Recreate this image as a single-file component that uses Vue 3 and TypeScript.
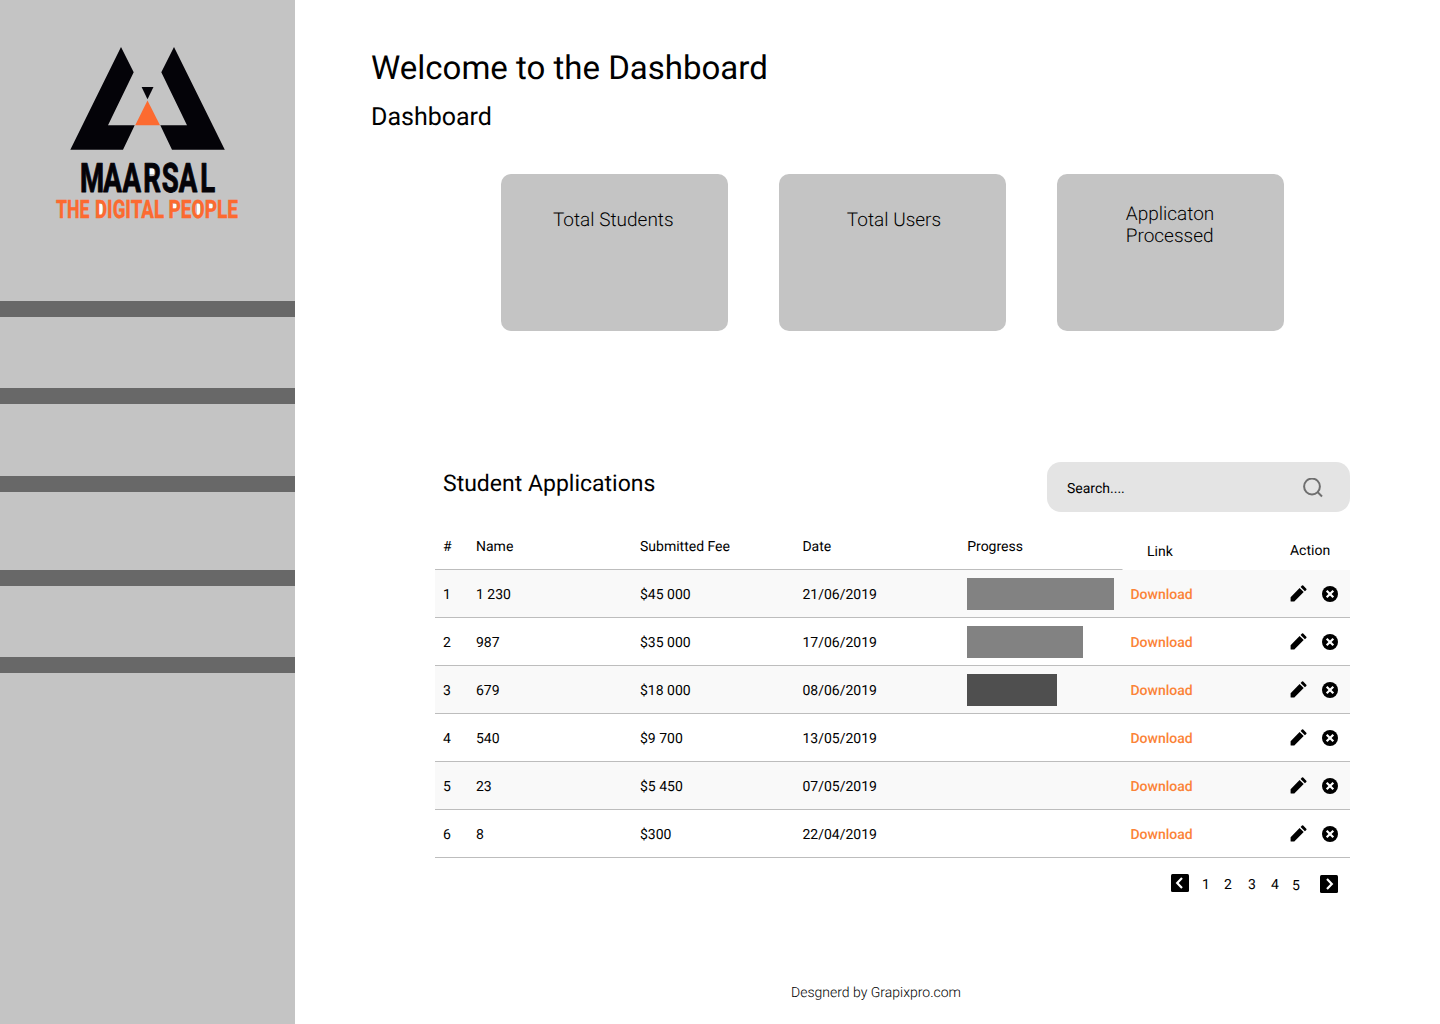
<script setup lang="ts">
interface Application {
  id: number
  name: string
  fee: string
  date: string
  progress: number
  tone?: string
}

const menuSlots: number[] = [1, 2, 3, 4, 5]
const pages: number[] = [1, 2, 3, 4, 5]
const cards: string[] = ['Total Students', 'Total Users', 'Applicaton\nProcessed']

const applications: Application[] = [
  { id: 1, name: '1 230', fee: '$45 000', date: '21/06/2019', progress: 147.3 },
  { id: 2, name: '987', fee: '$35 000', date: '17/06/2019', progress: 116.3 },
  { id: 3, name: '679', fee: '$18 000', date: '08/06/2019', progress: 90.3, tone: 'dark' },
  { id: 4, name: '540', fee: '$9 700', date: '13/05/2019', progress: 0 },
  { id: 5, name: '23', fee: '$5 450', date: '07/05/2019', progress: 0 },
  { id: 6, name: '8', fee: '$300', date: '22/04/2019', progress: 0 },
]
</script>

<template>
  <div class="page">
    <aside class="sidebar">
      <svg class="logo" width="190" height="190" viewBox="52 43 190 190">
        <path fill="#040308" d="M121 47 133.7 72.3 108 125.3H134.7L123 149.7H70.3Z" />
        <path fill="#040308" d="M174 47 224.8 149.7H172L160.3 125.3H187L161.3 72.3Z" />
        <path fill="#040308" d="M141.6 87H153.5L147.5 99.2Z" />
        <path fill="#fc6a30" d="M147.5 100.5 160 125.3H135.2Z" />
        <path
          fill="#fff"
          d="M148 167H154V174H148ZM99 204H102.500V215H99ZM173 204H176.500V209H173ZM197 204H200V215H197ZM209 204H212.500V209H209Z"
        />
        <text
          class="brand"
          transform="scale(.68 1)"
          x="135.3 165.6 193.7 223.6 250.2 276.3 305.3"
          y="191.5"
        >MAARSAL</text>
        <text class="tagline" x="56" y="218.4" textLength="33.500" lengthAdjust="spacingAndGlyphs">THE</text>
        <text class="tagline" x="95" y="218.4" textLength="69" lengthAdjust="spacingAndGlyphs">DIGITAL</text>
        <text class="tagline" x="168.500" y="218.4" textLength="69.500" lengthAdjust="spacingAndGlyphs">PEOPLE</text>
      </svg>
      <nav class="menu">
        <div v-for="slot in menuSlots" :key="slot" class="divider" />
      </nav>
    </aside>

    <main class="content">
      <h1>Welcome to the Dashboard</h1>
      <h2>Dashboard</h2>

      <section class="cards">
        <div v-for="card in cards" :key="card" class="card"><span>{{ card }}</span></div>
      </section>

      <section class="applications">
        <header class="toolbar">
          <h3>Student Applications</h3>
          <div class="search">
            <span>Search....</span>
            <svg width="20" height="20" viewBox="0 0 20 20" fill="none" stroke="#6f6f6f" stroke-width="2">
              <circle cx="9" cy="8.500" r="7.900" />
              <path d="M14.500 14 19 18.500" />
            </svg>
          </div>
        </header>

        <div class="row head">
          <span>#</span><span>Name</span><span>Submitted Fee</span><span>Date</span>
          <span>Progress</span><span class="link-head">Link</span><span class="action-head">Action</span>
        </div>
        <div v-for="app in applications" :key="app.id" class="row entry">
          <span>{{ app.id }}</span>
          <span>{{ app.name }}</span>
          <span>{{ app.fee }}</span>
          <span>{{ app.date }}</span>
          <div class="progress">
            <div v-if="app.progress" class="bar" :class="app.tone" :style="{ width: app.progress + 'px' }" />
          </div>
          <a class="download">Download</a>
          <div class="actions">
            <svg width="17" height="18" viewBox="0 0 17 18">
              <path d="M.6 12.300 9.600 3 13.700 7.100 4.300 16.500H1.200Q.6 16.500.6 15.900ZM10.600 2 12 .6Q12.600 0 13.200.6L16.300 3.700Q16.900 4.300 16.300 4.900L14.900 6.300Z" />
            </svg>
            <svg width="16" height="16" viewBox="0 0 16 16">
              <circle cx="8" cy="8" r="8" />
              <path d="M4.700 4.700 11.300 11.300M11.300 4.700 4.700 11.300" stroke="#fff" stroke-width="2.200" />
            </svg>
          </div>
        </div>

        <div class="pager">
          <svg width="18" height="18" viewBox="0 0 18 18">
            <rect width="18" height="18" rx="1.500" />
            <path d="M11 4.100 6.200 9 11 13.900" fill="none" stroke="#fff" stroke-width="2.200" />
          </svg>
          <div class="numbers"><span v-for="n in pages" :key="n">{{ n }}</span></div>
          <svg class="next" width="18" height="18" viewBox="0 0 18 18">
            <rect width="18" height="18" rx="1.500" />
            <path d="M7 4.100 11.800 9 7 13.900" fill="none" stroke="#fff" stroke-width="2.200" />
          </svg>
        </div>
      </section>

      <footer>Desgnerd by Grapixpro.com</footer>
    </main>
  </div>
</template>

<style>
body {
  margin: 0;
  background: #fff;
}
</style>

<style scoped>
.page {
  display: flex;
  width: 1440px;
  height: 1024px;
  overflow: hidden;
  background: #fff;
  color: #000;
  font: 400 14px/16px Roboto, sans-serif;
  text-rendering: geometricPrecision;
}
.page svg {
  display: block;
}
.sidebar {
  flex: none;
  width: 295px;
  background: #c4c4c4;
}
.logo {
  margin: 43px 0 0 52px;
  overflow: visible;
}
.brand {
  font: 700 40.5px Roboto, sans-serif;
  fill: #040308;
  stroke: #040308;
  stroke-width: 1px;
  stroke-linejoin: round;
  text-anchor: middle;
}
.tagline {
  font: 800 25.5px Roboto, sans-serif;
  fill: #fc6a30;
  stroke: #fc6a30;
  stroke-width: 0.3px;
}
.menu {
  margin-top: 68px;
}
.divider {
  height: 16px;
  margin-bottom: 71px;
  background: #686868;
}
.divider:nth-child(2) {
  margin-bottom: 72px;
}
.divider:nth-child(3) {
  margin-bottom: 78px;
}
.content {
  flex: 1;
  display: flex;
  flex-direction: column;
}
h1,
h2,
h3 {
  margin: 0;
  font-weight: 400;
}
h1 {
  margin: 49px 0 0 76px;
  font-size: 33px;
  line-height: 39px;
}
h2 {
  margin: 15px 0 0 76px;
  font-size: 25px;
  line-height: 30px;
}
.cards {
  display: flex;
  gap: 51px;
  margin: 41px 0 0 206px;
}
.card {
  display: flex;
  justify-content: center;
  width: 227px;
  height: 157px;
  border-radius: 10px;
  background: #c4c4c4;
  font-size: 19px;
  font-weight: 300;
  line-height: 22px;
  white-space: pre;
}
.card span {
  margin: 35px 2.5px 0 0;
}
.card:nth-child(2) span {
  margin: 35px 0 0 3px;
}
.card:last-child span {
  margin: 29px 1px 0 0;
}
.applications {
  width: 915px;
  margin: 131px 0 0 140px;
}
.toolbar {
  display: flex;
  justify-content: space-between;
}
h3 {
  margin: 8px 0 0 8px;
  font-size: 23px;
  line-height: 28px;
}
.search {
  box-sizing: border-box;
  display: flex;
  justify-content: space-between;
  width: 303px;
  height: 50px;
  padding: 16px 27px 0 20px;
  border-radius: 14px;
  background: #e4e4e4;
}
.search span {
  margin-top: 3px;
}
.row {
  display: grid;
  grid-template-columns: 33px 164px 162.4px 164.8px 163.3px 159.5px 1fr;
  box-sizing: border-box;
  padding-left: 8px;
}
.head {
  height: 58px;
  padding-top: 27px;
  background: linear-gradient(#bdbdbd, #bdbdbd) left bottom / 687.5px 1px no-repeat;
}
.link-head {
  margin: 5px 0 0 16.5px;
}
.action-head {
  margin-top: 4px;
}
.entry {
  height: 48px;
  align-items: center;
  padding-top: 1px;
  border-bottom: 1px solid #bdbdbd;
}
.entry > span,
.download {
  padding-top: 2px;
}
.entry:nth-child(odd) {
  background: #f9f9f9;
}
.bar {
  height: 32px;
  background: #828282;
}
.bar.dark {
  background: #4f4f4f;
}
.download {
  color: #fb8337;
  font-weight: 500;
}
.actions {
  display: flex;
  align-items: center;
  gap: 15px;
}
.pager {
  display: flex;
  margin: 16px 0 0 736px;
}
.numbers {
  display: flex;
  width: 122px;
  height: 16px;
  margin: 3px 0 0 13px;
}
.numbers span {
  width: 23px;
}
.numbers span:first-child {
  width: 22px;
}
.numbers span:nth-child(2) {
  width: 24px;
}
.numbers span:last-child {
  margin: 1px 0 0 -2px;
}
.next {
  margin: 1px 0 0 -4px;
}
footer {
  margin: 92px 0 0 496px;
  font-weight: 300;
}
</style>
